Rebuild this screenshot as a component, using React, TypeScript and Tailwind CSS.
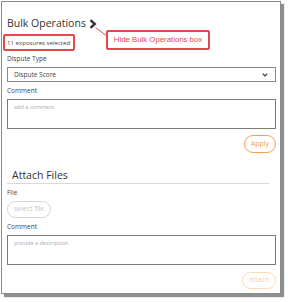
import React from "react";

export default function App() {
  const font = { fontFamily: '"Open Sans", "Noto Sans", sans-serif' };
  return (
    <div className="w-[288px] h-[302px] bg-white relative" style={font}>
      <div className="ml-[1px] mt-[1px] w-[280px] h-[293px] border border-[#8a8a8a] shadow-[3px_3px_1px_#8f8f8f] bg-white flex flex-col pl-[5px] pr-[4px] text-[#444]">
        <div className="mt-[13px] flex items-center h-[16px]">
          <span className="text-[10.5px] text-[#333] leading-none">Bulk Operations</span>
          <svg width="8" height="10" viewBox="0 0 8 10" className="ml-[3px] mt-[1px]">
            <path d="M1.5 1.2 L5.8 5 L1.5 8.8" stroke="#333" strokeWidth="2.4" fill="none" />
          </svg>
        </div>
        <div className="mt-[3px] -ml-[4px] w-[72px] h-[17px] border-2 border-[#e5484d] rounded-[2px] flex items-center pl-[2px]">
          <span className="text-[6.1px] text-[#444] whitespace-nowrap">11 exposures selected</span>
        </div>
        <div className="mt-[3px] text-[6.5px] leading-[10px]">Dispute Type</div>
        <div className="mt-[3px] h-[15px] border border-[#8a8a8a] flex items-center justify-between pl-[6px] pr-[7px]">
          <span className="text-[6.5px] text-[#444]">Dispute Score</span>
          <svg width="6" height="4" viewBox="0 0 6 4">
            <path d="M0.7 0.7 L3 3 L5.3 0.7" stroke="#333" strokeWidth="1.2" fill="none" />
          </svg>
        </div>
        <div className="mt-[4px] text-[6.5px] leading-[10px]">Comment</div>
        <div className="mt-[3px] h-[30px] border border-[#7a7a7a] pl-[6px] pt-[3px]">
          <span className="text-[5.5px] text-[#aaa] block leading-[8px]">add a comment</span>
        </div>
        <div className="mt-[6px] flex justify-end">
          <div className="w-[32px] h-[18px] rounded-full border border-[#f5a04e] flex items-center justify-center text-[7px] text-[#f5a04e]">
            Apply
          </div>
        </div>
        <div className="mt-[15px] ml-[5px] text-[10.5px] text-[#333] leading-[14px]">Attach Files</div>
        <div className="mt-[1px] mr-[7px] h-px bg-[#d9d9d9]" />
        <div className="mt-[4px] text-[6.5px] leading-[10px]">File</div>
        <div className="mt-[3px]">
          <div className="w-[44px] h-[17px] rounded-full border border-[#d6d6cc] flex items-center justify-center text-[7px] text-[#c8c8c0]">
            select file
          </div>
        </div>
        <div className="mt-[4px] text-[6.5px] leading-[10px]">Comment</div>
        <div className="mt-[3px] h-[30px] border border-[#7a7a7a] pl-[6px] pt-[3px]">
          <span className="text-[5.5px] text-[#aaa] block leading-[8px]">provide a description</span>
        </div>
        <div className="mt-[7px] flex justify-end">
          <div className="w-[34px] h-[17px] rounded-full border border-[#fbd9b4] flex items-center justify-center text-[7px] text-[#fbd2a6]">
            attach
          </div>
        </div>
      </div>
      <svg className="absolute left-[95px] top-[26px]" width="14" height="12" viewBox="0 0 14 12">
        <path d="M0.5 0.5 L12 9" stroke="#e5484d" strokeWidth="1" fill="none" />
      </svg>
      <div
        className="absolute left-[106px] top-[29px] w-[104px] h-[20px] border-2 border-[#e5484d] rounded-[2px] bg-white flex items-center justify-center text-[7.8px] text-[#e5484d] whitespace-nowrap"
        style={{ fontFamily: '"Liberation Sans", Arial, sans-serif' }}
      >
        Hide Bulk Operations box
      </div>
    </div>
  );
}
